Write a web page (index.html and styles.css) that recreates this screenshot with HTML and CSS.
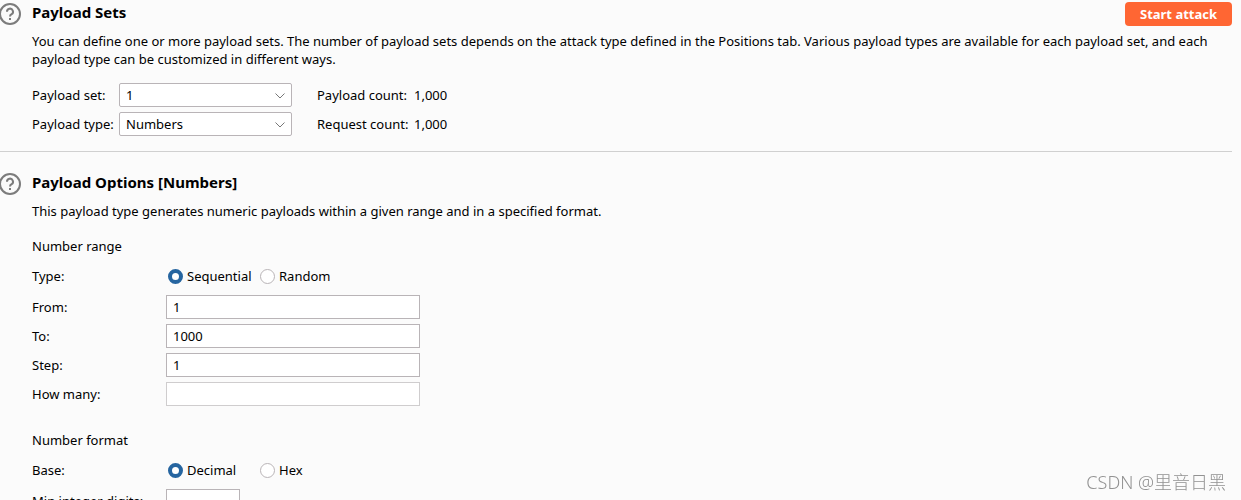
FILE: index.html
```
<!DOCTYPE html>
<html lang="en">
<head>
  <meta charset="utf-8">
  <title>Payloads</title>
  <link rel="stylesheet" href="styles.css">
</head>
<body>
  <main class="panel">
    <section class="section">
      <svg class="help" viewBox="0 0 22 26" aria-hidden="true">
        <circle cx="10" cy="14" r="10"/>
        <path d="M7 11.8a3 3 0 1 1 4.6 2.4c-1.1.6-1.6 1-1.6 2.2"/>
        <path d="M9 19h2"/>
      </svg>
      <div class="content">
        <header class="section-header">
          <h2>Payload Sets</h2>
          <button class="start-button" type="button">Start attack</button>
        </header>
        <p>You can define one or more payload sets. The number of payload sets depends on the attack type defined in the Positions tab. Various payload types are available for each payload set, and each payload type can be customized in different ways.</p>
        <div class="set-grid">
          <label for="payload-set">Payload set:</label>
          <div class="select">
            <select id="payload-set"><option>1</option></select>
            <svg viewBox="0 0 10 6" aria-hidden="true"><path d="M.5.5 5 5 9.5.5"/></svg>
          </div>
          <span class="count-label">Payload count:</span>
          <span>1,000</span>
          <label for="payload-type">Payload type:</label>
          <div class="select">
            <select id="payload-type"><option>Numbers</option></select>
            <svg viewBox="0 0 10 6" aria-hidden="true"><path d="M.5.5 5 5 9.5.5"/></svg>
          </div>
          <span class="count-label">Request count:</span>
          <span>1,000</span>
        </div>
      </div>
    </section>

    <section class="section">
      <svg class="help" viewBox="0 0 22 26" aria-hidden="true">
        <circle cx="10" cy="14" r="10"/>
        <path d="M7 11.8a3 3 0 1 1 4.6 2.4c-1.1.6-1.6 1-1.6 2.2"/>
        <path d="M9 19h2"/>
      </svg>
      <div class="content">
        <header class="section-header">
          <h2>Payload Options [Numbers]</h2>
        </header>
        <p>This payload type generates numeric payloads within a given range and in a specified format.</p>

        <h3 class="range-title">Number range</h3>
        <div class="radio-row">
          <span id="type-label">Type:</span>
          <div class="radios" role="radiogroup" aria-labelledby="type-label">
            <label><input type="radio" name="type" checked>Sequential</label>
            <label><input type="radio" name="type">Random</label>
          </div>
        </div>
        <div class="option-grid">
          <label for="from">From:</label>
          <input class="field" id="from" type="text" value="1">
          <label for="to">To:</label>
          <input class="field" id="to" type="text" value="1000">
          <label for="step">Step:</label>
          <input class="field" id="step" type="text" value="1">
          <label for="how-many">How many:</label>
          <input class="field" id="how-many" type="text" disabled>
        </div>

        <h3 class="format-title">Number format</h3>
        <div class="radio-row">
          <span id="base-label">Base:</span>
          <div class="radios" role="radiogroup" aria-labelledby="base-label">
            <label><input type="radio" name="base" checked>Decimal</label>
            <label><input type="radio" name="base">Hex</label>
          </div>
        </div>
        <div class="option-grid">
          <label for="min-integer">Min integer digits:</label>
          <input class="field short" id="min-integer" type="text">
        </div>
      </div>
    </section>
  </main>
  <div class="watermark">CSDN @里音日黑</div>
</body>
</html>
```
FILE: styles.css
```
* {
  box-sizing: border-box;
}

body {
  height: 100vh;
  margin: 0;
  overflow: hidden;
  background: #fbfbfb;
  color: #000;
  font: 13px/18px "Noto Sans", "Open Sans", sans-serif;
}

.panel {
  padding-right: 9px;
}

.section {
  display: grid;
  grid-template-columns: 32px 1fr;
  padding-bottom: 15px;
}

.section + .section {
  padding-top: 18px;
  border-top: 1px solid #d0d0d0;
}

.help {
  width: 22px;
  height: 26px;
  fill: none;
  stroke: #7c7c7c;
  stroke-width: 2;
}

.section-header {
  display: flex;
  justify-content: space-between;
  height: 26px;
}

h2 {
  margin: 0;
  font-size: 15px;
  line-height: 24px;
}

h3 {
  margin: 0 0 9px;
  font-size: 13px;
  font-weight: normal;
}

p {
  margin: 6px 0 0;
}

.start-button {
  width: 107px;
  height: 24px;
  margin-top: 2px;
  padding: 0;
  border: none;
  border-radius: 4px;
  background: #ff6633;
  color: #fff;
  font: bold 13px/24px "Noto Sans", "Open Sans", sans-serif;
}

.set-grid {
  display: grid;
  grid-template-columns: 87px 173px 122px 1fr;
  grid-auto-rows: 24px;
  row-gap: 5px;
  align-items: center;
  margin-top: 15px;
}

.count-label {
  padding-left: 25px;
}

.select {
  position: relative;
}

.select select {
  display: block;
  width: 100%;
  height: 24px;
  padding: 0 6px;
  border: 1px solid #b9b4b7;
  border-radius: 2px;
  background: #fff;
  color: #000;
  font: inherit;
  appearance: none;
}

.select svg {
  position: absolute;
  top: 10px;
  right: 7px;
  width: 10px;
  height: 6px;
  fill: none;
  stroke: #777;
}

.range-title {
  margin-top: 17px;
}

.format-title {
  margin-top: 25px;
}

.radio-row,
.option-grid {
  display: grid;
  grid-template-columns: 134px 1fr;
  row-gap: 5px;
  align-items: center;
}

.radio-row {
  margin-bottom: 7px;
}

.radios {
  display: grid;
  grid-template-columns: 92px 92px;
  height: 24px;
  padding-left: 2px;
}

.radios label {
  display: flex;
  align-items: center;
  gap: 4px;
}

.radios input {
  width: 15px;
  height: 15px;
  margin: 0;
  border: 1px solid #b9b4b7;
  border-radius: 50%;
  background: #fff;
  appearance: none;
}

.radios input:checked {
  border: 4px solid #2665a0;
}

.field {
  width: 254px;
  height: 24px;
  padding: 0 6px;
  border: 1px solid #b9b4b7;
  background: #fff;
  color: #000;
  font: inherit;
}

.field:disabled {
  border-color: #cfcdce;
}

.short {
  width: 74px;
}

.watermark {
  position: fixed;
  right: 15px;
  bottom: 6px;
  color: #929292;
  font: 300 18px/24px "Noto Sans", "Noto Sans CJK SC", sans-serif;
}
```
